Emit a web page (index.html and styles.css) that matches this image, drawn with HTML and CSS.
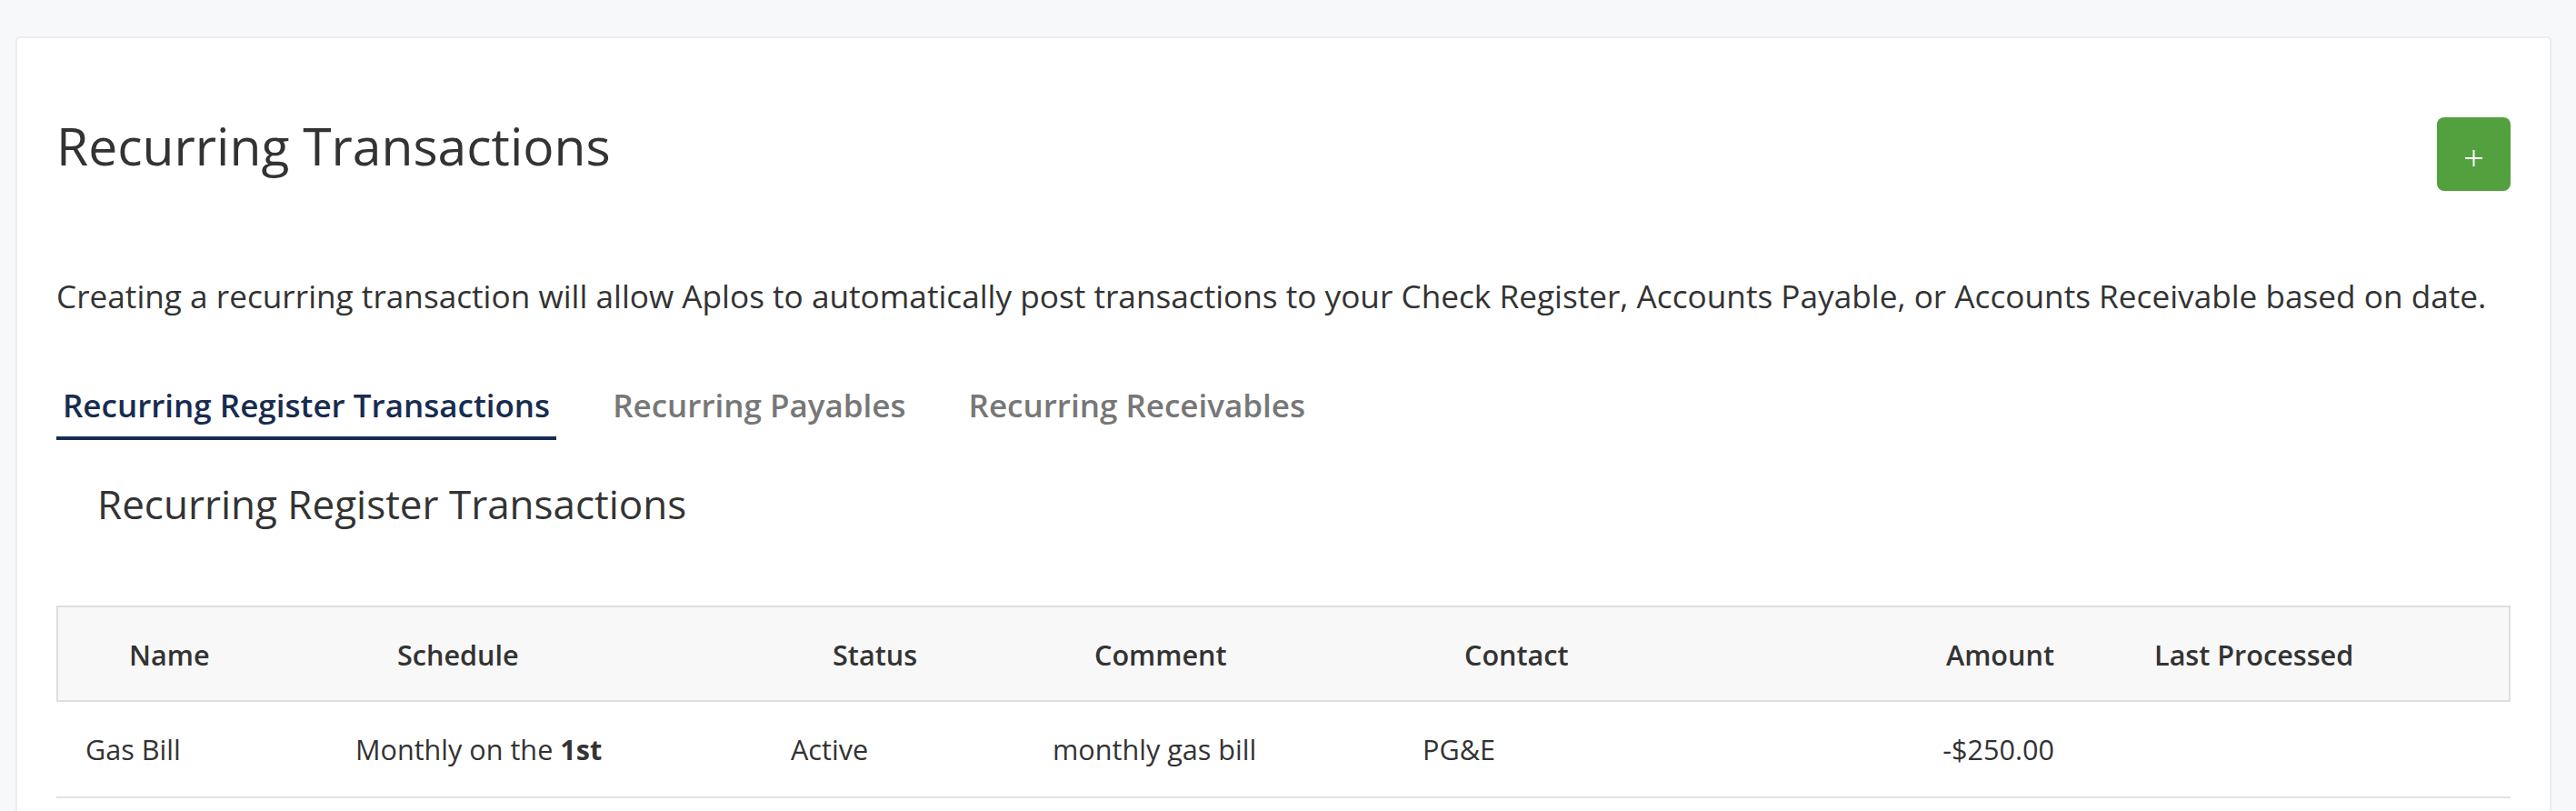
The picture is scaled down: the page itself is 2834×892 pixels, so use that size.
FILE: index.html
```html
<!DOCTYPE html>
<html lang="en">
<head>
<meta charset="utf-8">
<title>Recurring Transactions</title>
<link rel="stylesheet" href="styles.css">
</head>
<body>
<div class="card">
  <div class="head">
    <h1 class="title">Recurring Transactions</h1>
    <button class="add-btn" type="button" aria-label="Add">
      <svg width="19" height="18" viewBox="0 0 19 18" aria-hidden="true">
        <line x1="0" y1="9" x2="19" y2="9" stroke="#ffffff" stroke-width="2"/>
        <line x1="9.5" y1="0" x2="9.5" y2="18" stroke="#ffffff" stroke-width="2"/>
      </svg>
    </button>
  </div>
  <p class="desc">Creating a recurring transaction will allow Aplos to automatically post transactions to your Check Register, Accounts Payable, or Accounts Receivable based on date.</p>
  <nav class="tabs">
    <a class="tab active">Recurring Register Transactions</a>
    <a class="tab">Recurring Payables</a>
    <a class="tab">Recurring Receivables</a>
  </nav>
  <h2 class="subtitle">Recurring Register Transactions</h2>
  <table class="grid">
    <colgroup>
      <col class="c-name"><col class="c-sched"><col class="c-status"><col class="c-comment"><col class="c-contact"><col class="c-amount"><col class="c-last">
    </colgroup>
    <thead>
      <tr>
        <th>Name</th>
        <th>Schedule</th>
        <th>Status</th>
        <th>Comment</th>
        <th>Contact</th>
        <th class="num">Amount</th>
        <th>Last Processed</th>
      </tr>
    </thead>
    <tbody>
      <tr>
        <td>Gas Bill</td>
        <td>Monthly on the <strong>1st</strong></td>
        <td>Active</td>
        <td>monthly gas bill</td>
        <td>PG&amp;E</td>
        <td class="num">-$250.00</td>
        <td></td>
      </tr>
    </tbody>
  </table>
</div>
</body>
</html>
```

FILE: styles.css
```css
html, body {
  margin: 0;
  padding: 0;
  background: #f7f8fa;
}
body {
  font-family: "Open Sans", "Noto Sans", sans-serif;
  color: #333333;
  padding: 40px 27px 0 17px;
}
.card {
  background: #ffffff;
  border: 2px solid #eaecef;
  border-bottom: none;
  border-radius: 5px 5px 0 0;
  padding: 0 43px 20px 43px;
  min-height: 900px;
}
.head {
  display: flex;
  justify-content: space-between;
  align-items: flex-start;
  padding-top: 84px;
}
.title {
  margin: 0;
  font-size: 57px;
  line-height: 69px;
  font-weight: 400;
  color: #333333;
}
.add-btn {
  margin-top: 3px;
  width: 81px;
  height: 81px;
  border: none;
  border-radius: 8px;
  background: #53a13e;
  display: flex;
  align-items: center;
  justify-content: center;
  padding: 9px 0 0 0;
  cursor: pointer;
}
.add-btn svg { display: block; }
.desc {
  margin: 88px 0 0 0;
  font-size: 35.2px;
  line-height: 54px;
  color: #333333;
  white-space: nowrap;
}
.tabs {
  display: flex;
  gap: 55px;
  margin-top: 67px;
}
.tab {
  font-size: 35px;
  line-height: 54px;
  font-weight: 600;
  color: #777777;
  padding: 0 7px 7px 7px;
  border-bottom: 4px solid transparent;
}
.tab.active {
  color: #172c50;
  border-bottom-color: #172c50;
}
.subtitle {
  margin: 45px 0 0 45px;
  font-size: 44px;
  line-height: 50px;
  font-weight: 400;
  color: #333333;
}
.grid {
  margin-top: 87px;
  width: 2700px;
  table-layout: fixed;
  border-collapse: separate;
  border-spacing: 0;
  font-size: 30.6px;
  line-height: 43px;
}
.c-name { width: 297px; }
.c-sched { width: 479px; }
.c-status { width: 288px; }
.c-comment { width: 407px; }
.c-contact { width: 380px; }
.c-amount { width: 379px; }
.c-last { width: 470px; }
.grid th {
  background: #f8f8f8;
  font-weight: 600;
  text-align: left;
  color: #333333;
  padding: 31px 0 28px 78px;
  border-top: 2px solid #dedede;
  border-bottom: 2px solid #dedede;
  white-space: nowrap;
}
.grid th:first-child { border-left: 2px solid #dedede; padding-left: 78px; }
.grid th:last-child { border-right: 2px solid #dedede; }
.grid td {
  padding: 31px 0 30px 32px;
  border-bottom: 2px solid #e3e3e3;
  color: #333333;
  white-space: nowrap;
}
.grid td strong { font-weight: 700; }
.grid th.num, .grid td.num {
  text-align: right;
  padding-left: 0;
  padding-right: 32px;
}
```
